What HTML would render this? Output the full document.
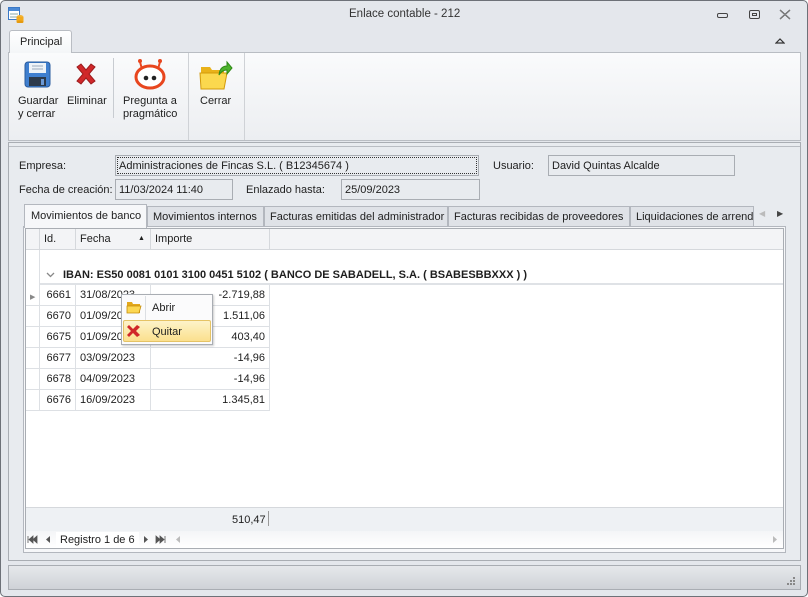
<!DOCTYPE html>
<html><head><meta charset="utf-8"><style>
*{box-sizing:border-box;margin:0;padding:0}
body{width:808px;height:597px;overflow:hidden;font-family:"Liberation Sans",sans-serif;font-size:11px;color:#1e1e1e;background:#fff;position:relative}
.a{position:absolute}
.win{left:0;top:0;width:808px;height:597px;border:1px solid #6d7178;border-radius:5px;background:#e4e7ec}
.t{white-space:nowrap}
.box{border:1px solid #a9adb3;background:#e8ebef;padding:4px 3px 0;height:21px}
.tab{top:206px;height:21px;border:1px solid #b3b7be;border-bottom:none;background:#dfe2e7;padding:4px 5px;overflow:hidden}
.cell{position:absolute;height:21px;border-right:1px solid #dde0e4;border-bottom:1px solid #dde0e4;padding:4px 4px}
</style></head><body>
<div class="a win"></div>
<svg class="a" style="left:8px;top:7px" width="16" height="16"><rect x="0.5" y="0.5" width="11" height="12" fill="#fff" stroke="#3a78c6"/><rect x="1" y="1" width="10" height="3" fill="#4b8ad6"/><line x1="2" y1="7" x2="10" y2="7" stroke="#8aa"/><line x1="2" y1="10" x2="10" y2="10" stroke="#8aa"/><ellipse cx="12" cy="10" rx="3.5" ry="2" fill="#f2b233"/><rect x="8.5" y="10" width="7" height="5" fill="#f2a91d"/><ellipse cx="12" cy="15" rx="3.5" ry="1.5" fill="#e59a10"/></svg>
<div class="a t" style="left:349px;top:8px;color:#333;font-size:11.5px">Enlace contable - 212</div>
<div class="a" style="left:717px;top:13px;width:11px;height:5px;border:1px solid #444;border-radius:2px"></div>
<div class="a" style="left:749px;top:10px;width:11px;height:9px;border:1px solid #444;border-radius:2px"><div style="margin:2px;height:3px;border:1px solid #444"></div></div>
<svg class="a" style="left:779px;top:9px" width="12" height="11"><path d="M1 1 L11 10 M11 1 L1 10" stroke="#444" stroke-width="1.2" fill="none"/><path d="M1 1 L11 10 M11 1 L1 10" stroke="#fff" stroke-width="0.3" fill="none"/></svg>
<svg class="a" style="left:775px;top:38px" width="10" height="7"><path d="M1 5 L5 1 L9 5 Z" fill="none" stroke="#333" stroke-width="1.2"/></svg>
<div class="a" style="left:9px;top:30px;width:63px;height:23px;border:1px solid #b9bdc3;border-bottom:none;border-radius:3px 3px 0 0;background:linear-gradient(#fff,#f4f6f8);z-index:2"></div>
<div class="a t" style="left:20px;top:36px;z-index:3">Principal</div>
<div class="a" style="left:8px;top:52px;width:793px;height:89px;border:1px solid #b9bdc3;background:linear-gradient(#fafbfc,#eceef1)"></div>
<div class="a" style="left:113px;top:58px;width:1px;height:60px;background:#c8ccd1"></div>
<div class="a" style="left:188px;top:53px;width:1px;height:87px;background:#cfd2d6"></div>
<div class="a" style="left:244px;top:53px;width:1px;height:87px;background:#cfd2d6"></div>
<svg class="a" style="left:24px;top:61px" width="28" height="28"><rect x="1" y="1" width="25" height="25" rx="3" fill="#3f7fcf" stroke="#2a5c9e"/><rect x="5" y="2" width="17" height="10" fill="#eef3f8"/><line x1="8" y1="5" x2="19" y2="5" stroke="#9ab"/><line x1="8" y1="8" x2="19" y2="8" stroke="#9ab"/><rect x="5" y="16" width="17" height="9" fill="#2c3a4b"/><rect x="17" y="18" width="3" height="6" fill="#6c9ad6"/></svg>
<svg class="a" style="left:74px;top:62px" width="24" height="24"><path d="M3 5 L7 2 L12 8 L17 2 L21 5 L15 12 L21 19 L17 22 L12 16 L7 22 L3 19 L9 12Z" fill="#d0282a" stroke="#9b1b1c"/></svg>
<svg class="a" style="left:133px;top:58px" width="34" height="32"><line x1="7" y1="4" x2="9" y2="11" stroke="#e8461e" stroke-width="2"/><line x1="27" y1="4" x2="25" y2="11" stroke="#e8461e" stroke-width="2"/><circle cx="7" cy="3" r="2" fill="#e8461e"/><circle cx="27" cy="3" r="2" fill="#e8461e"/><ellipse cx="17" cy="19" rx="14" ry="11" fill="#fff" stroke="#e8461e" stroke-width="3"/><circle cx="13" cy="20" r="2.3" fill="#222"/><circle cx="21" cy="20" r="2.3" fill="#222"/></svg>
<svg class="a" style="left:199px;top:59px" width="34" height="32"><path d="M2 8 h9 l2 3 h12 v18 h-23z" fill="#e9b21a"/><path d="M1 14 h27 l-3 16 h-23z" fill="#fbd84e" stroke="#d39a0b"/><path d="M20 16 q1 -9 8 -9 v-4 l5 6 l-5 6 v-4 q-5 0 -8 5z" fill="#4db32d" stroke="#2f8a17"/></svg>
<div class="a" style="left:18px;top:95px;line-height:13px">Guardar<br>y cerrar</div>
<div class="a t" style="left:67px;top:95px">Eliminar</div>
<div class="a" style="left:123px;top:95px;line-height:13px">Pregunta a<br>pragmático</div>
<div class="a t" style="left:200px;top:95px">Cerrar</div>
<div class="a" style="left:8px;top:142px;width:793px;height:419px;border:1px solid #a9adb3;background:#e8ebef"></div>
<div class="a" style="left:9px;top:146px;width:791px;height:1px;background:#b9bdc3"></div>
<div class="a t" style="left:19px;top:160px">Empresa:</div>
<div class="a box t" style="left:115px;top:155px;width:364px;outline:1px dotted #333;outline-offset:-3px">Administraciones de Fincas S.L. ( B12345674 )</div>
<div class="a t" style="left:493px;top:160px">Usuario:</div>
<div class="a box t" style="left:548px;top:155px;width:187px">David Quintas Alcalde</div>
<div class="a t" style="left:19px;top:184px">Fecha de creación:</div>
<div class="a box t" style="left:115px;top:179px;width:118px">11/03/2024 11:40</div>
<div class="a t" style="left:246px;top:184px">Enlazado hasta:</div>
<div class="a box t" style="left:341px;top:179px;width:139px">25/09/2023</div>
<div class="a tab t" style="left:24px;top:204px;height:24px;width:123px;background:#f6f7f9;z-index:2;padding:5px 6px">Movimientos de banco</div>
<div class="a tab t" style="left:147px;width:117px">Movimientos internos</div>
<div class="a tab t" style="left:264px;width:184px">Facturas emitidas del administrador</div>
<div class="a tab t" style="left:448px;width:182px">Facturas recibidas de proveedores</div>
<div class="a tab t" style="left:630px;width:124px">Liquidaciones de arrendamientos</div>
<div class="a t" style="left:759px;top:209px;font-size:8px;color:#bbb">◀</div>
<div class="a t" style="left:777px;top:209px;font-size:8px;color:#444">▶</div>
<div class="a" style="left:23px;top:226px;width:763px;height:327px;border:1px solid #b3b7be;background:#f6f7f9"></div>
<div class="a" style="left:25px;top:228px;width:759px;height:321px;border:1px solid #a9adb3;background:#fff"></div>
<div class="a" style="left:26px;top:229px;width:757px;height:21px;background:#f3f4f6;border-bottom:1px solid #d5d8dc"></div>
<div class="cell" style="left:26px;top:229px;width:14px;border-color:#d5d8dc"></div>
<div class="cell t" style="left:40px;top:229px;width:36px;border-color:#d5d8dc">Id.</div>
<div class="cell t" style="left:76px;top:229px;width:75px;border-color:#d5d8dc">Fecha<span style="position:absolute;left:62px;top:6px;font-size:7px">▲</span></div>
<div class="cell t" style="left:151px;top:229px;width:119px;border-color:#d5d8dc">Importe</div>
<div class="a" style="left:26px;top:250px;width:14px;height:35px;border-right:1px solid #dde0e4"></div>
<svg class="a" style="left:46px;top:272px" width="9" height="6"><path d="M1 1 L4.5 4.5 L8 1" fill="none" stroke="#888" stroke-width="1.3"/></svg>
<div class="a t" style="left:63px;top:269px;font-weight:bold">IBAN: ES50 0081 0101 3100 0451 5102 ( BANCO DE SABADELL, S.A. ( BSABESBBXXX ) )</div>
<div class="a" style="left:40px;top:283px;width:743px;height:2px;background:#dfe2e6"></div>
<div class="cell" style="left:26px;top:285px;width:14px;padding:5px 4px"><span style="font-size:7px;color:#888">▶</span></div>
<div class="cell" style="left:26px;top:306px;width:14px"></div><div class="cell" style="left:26px;top:327px;width:14px"></div><div class="cell" style="left:26px;top:348px;width:14px"></div><div class="cell" style="left:26px;top:369px;width:14px"></div><div class="cell" style="left:26px;top:390px;width:14px"></div>
<div class="cell t" style="left:40px;top:285px;width:36px;text-align:right">6661</div><div class="cell t" style="left:76px;top:285px;width:75px">31/08/2023</div><div class="cell t" style="left:151px;top:285px;width:119px;text-align:right">-2.719,88</div>
<div class="cell t" style="left:40px;top:306px;width:36px;text-align:right">6670</div><div class="cell t" style="left:76px;top:306px;width:75px">01/09/2023</div><div class="cell t" style="left:151px;top:306px;width:119px;text-align:right">1.511,06</div>
<div class="cell t" style="left:40px;top:327px;width:36px;text-align:right">6675</div><div class="cell t" style="left:76px;top:327px;width:75px">01/09/2023</div><div class="cell t" style="left:151px;top:327px;width:119px;text-align:right">403,40</div>
<div class="cell t" style="left:40px;top:348px;width:36px;text-align:right">6677</div><div class="cell t" style="left:76px;top:348px;width:75px">03/09/2023</div><div class="cell t" style="left:151px;top:348px;width:119px;text-align:right">-14,96</div>
<div class="cell t" style="left:40px;top:369px;width:36px;text-align:right">6678</div><div class="cell t" style="left:76px;top:369px;width:75px">04/09/2023</div><div class="cell t" style="left:151px;top:369px;width:119px;text-align:right">-14,96</div>
<div class="cell t" style="left:40px;top:390px;width:36px;text-align:right">6676</div><div class="cell t" style="left:76px;top:390px;width:75px">16/09/2023</div><div class="cell t" style="left:151px;top:390px;width:119px;text-align:right">1.345,81</div>
<div class="a" style="left:26px;top:507px;width:757px;height:24px;background:#eef1f4;border-top:1px solid #d5d8dc"></div>
<div class="a t" style="left:232px;top:514px">510,47</div>
<div class="a" style="left:268px;top:511px;width:1px;height:15px;background:#999"></div>
<div class="a" style="left:26px;top:531px;width:757px;height:17px;background:linear-gradient(#f4f5f7,#fff)"></div>
<svg class="a" style="left:27px;top:535px" width="30" height="9"><path d="M1 1v7M2 4.5L6 1v7zM6 4.5L10 1v7z" fill="#555" stroke="#555" stroke-width=".8"/><path d="M19 4.5L23 1v7z" fill="#555"/></svg>
<div class="a t" style="left:56px;top:532px;width:83px;height:16px;background:#fff;padding:2px 4px">Registro 1 de 6</div>
<svg class="a" style="left:143px;top:535px" width="28" height="9"><path d="M1 1L5 4.5L1 8z" fill="#555"/><path d="M13 1l4 3.5l-4 3.5zM17 1l4 3.5l-4 3.5zM22 1v7" fill="#555" stroke="#555" stroke-width=".8"/></svg>
<svg class="a" style="left:175px;top:535px" width="6" height="9"><path d="M5 1L1 4.5L5 8z" fill="#bbb"/></svg>
<svg class="a" style="left:772px;top:535px" width="6" height="9"><path d="M1 1L5 4.5L1 8z" fill="#bbb"/></svg>
<div class="a" style="left:121px;top:294px;width:92px;height:51px;border:1px solid #a9adb3;background:#fbfbfc;box-shadow:1px 1px 2px rgba(0,0,0,.2)"></div>
<div class="a" style="left:145px;top:296px;width:1px;height:46px;background:#dcdfe3"></div>
<svg class="a" style="left:126px;top:300px" width="16" height="14"><path d="M1 2h5l1 2h7v9H1z" fill="#e3a81c"/><path d="M1 6h14l-2 7H1z" fill="#fcd752" stroke="#c58d0b" stroke-width=".8"/></svg>
<div class="a t" style="left:152px;top:302px">Abrir</div>
<div class="a" style="left:123px;top:320px;width:88px;height:22px;border:1px solid #e5c365;border-radius:2px;background:linear-gradient(#fdf3c9,#fbe08e)"></div>
<svg class="a" style="left:126px;top:324px" width="15" height="14"><path d="M1 3L3 1L7 5L11 1L14 3L10 7L14 11L11 13L7 9L3 13L1 11L5 7Z" fill="#d0282a"/></svg>
<div class="a t" style="left:152px;top:326px">Quitar</div>
<div class="a" style="left:8px;top:565px;width:793px;height:25px;border:1px solid #a9adb3;background:linear-gradient(#e6e8eb,#cfd2d7)"></div>
<svg class="a" style="left:786px;top:576px" width="10" height="10"><g fill="#888"><rect x="7" y="1" width="2" height="2"/><rect x="4" y="4" width="2" height="2"/><rect x="7" y="4" width="2" height="2"/><rect x="1" y="7" width="2" height="2"/><rect x="4" y="7" width="2" height="2"/><rect x="7" y="7" width="2" height="2"/></g></svg>
</body></html>
